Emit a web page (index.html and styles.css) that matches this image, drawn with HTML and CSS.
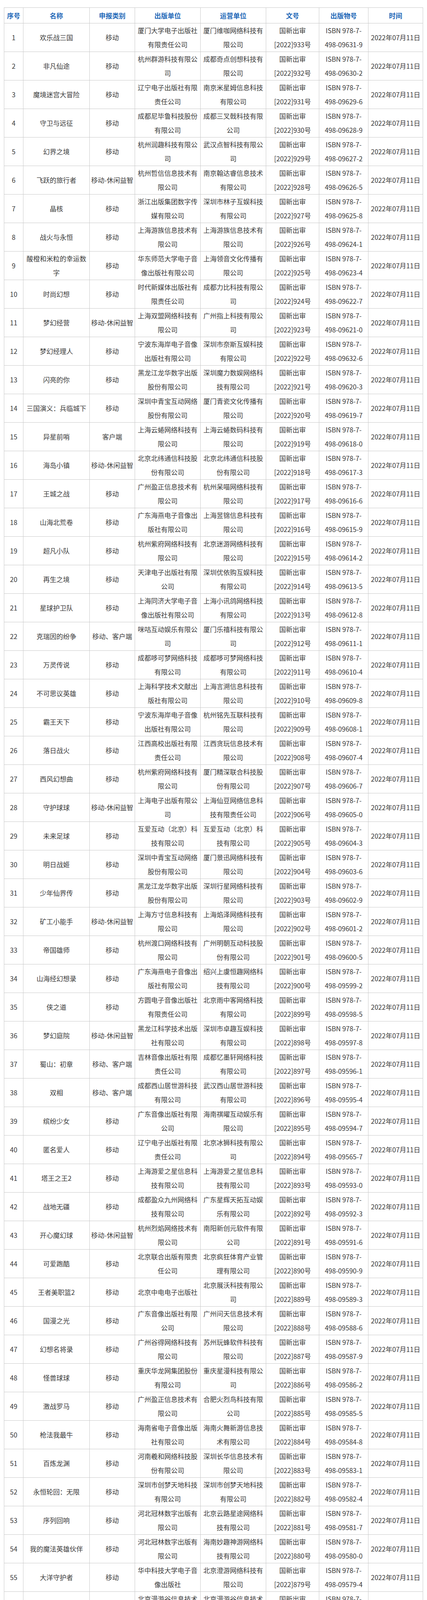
FILE: index.html
```html
<!DOCTYPE html>
<html lang="zh-CN">
<head>
<meta charset="utf-8">
<title>版号列表</title>
<link rel="stylesheet" href="styles.css">
</head>
<body>
<div class="page">
<table class="list">
<colgroup>
<col class="c-no"><col class="c-name"><col class="c-type"><col class="c-pub"><col class="c-op"><col class="c-doc"><col class="c-isbn"><col class="c-date">
</colgroup>
<thead>
<tr><th>序号</th><th>名称</th><th>申报类别</th><th>出版单位</th><th>运营单位</th><th>文号</th><th>出版物号</th><th>时间</th></tr>
</thead>
<tbody>
<tr><td>1</td><td>欢乐战三国</td><td>移动</td><td>厦门大学电子出版社有限责任公司</td><td>厦门维咖网络科技有限公司</td><td>国新出审<br>[2022]933号</td><td>ISBN 978-7-<br>498-09631-9</td><td class="date">2022年07月11日</td></tr>
<tr><td>2</td><td>非凡仙途</td><td>移动</td><td>杭州群游科技有限公司</td><td>成都奇点创想科技有限公司</td><td>国新出审<br>[2022]932号</td><td>ISBN 978-7-<br>498-09630-2</td><td class="date">2022年07月11日</td></tr>
<tr><td>3</td><td>魔境迷宫大冒险</td><td>移动</td><td>辽宁电子出版社有限责任公司</td><td>南京米星姆信息科技有限公司</td><td>国新出审<br>[2022]931号</td><td>ISBN 978-7-<br>498-09629-6</td><td class="date">2022年07月11日</td></tr>
<tr><td>4</td><td>守卫与远征</td><td>移动</td><td>成都尼毕鲁科技股份有限公司</td><td>成都三叉戟科技有限公司</td><td>国新出审<br>[2022]930号</td><td>ISBN 978-7-<br>498-09628-9</td><td class="date">2022年07月11日</td></tr>
<tr><td>5</td><td>幻界之境</td><td>移动</td><td>杭州润趣科技有限公司</td><td>武汉点智科技有限公司</td><td>国新出审<br>[2022]929号</td><td>ISBN 978-7-<br>498-09627-2</td><td class="date">2022年07月11日</td></tr>
<tr><td>6</td><td>飞跃的旅行者</td><td>移动-休闲益智</td><td>杭州哲信信息技术有限公司</td><td>南京翰达睿信息技术有限公司</td><td>国新出审<br>[2022]928号</td><td>ISBN 978-7-<br>498-09626-5</td><td class="date">2022年07月11日</td></tr>
<tr><td>7</td><td>晶核</td><td>移动</td><td>浙江出版集团数字传媒有限公司</td><td>深圳市林子互娱科技有限公司</td><td>国新出审<br>[2022]927号</td><td>ISBN 978-7-<br>498-09625-8</td><td class="date">2022年07月11日</td></tr>
<tr><td>8</td><td>战火与永恒</td><td>移动</td><td>上海游族信息技术有限公司</td><td>上海游族信息技术有限公司</td><td>国新出审<br>[2022]926号</td><td>ISBN 978-7-<br>498-09624-1</td><td class="date">2022年07月11日</td></tr>
<tr><td>9</td><td>酸橙和米粒的幸运数字</td><td>移动</td><td>华东师范大学电子音像出版社有限公司</td><td>上海领音文化传播有限公司</td><td>国新出审<br>[2022]925号</td><td>ISBN 978-7-<br>498-09623-4</td><td class="date">2022年07月11日</td></tr>
<tr><td>10</td><td>时尚幻想</td><td>移动</td><td>时代新媒体出版社有限责任公司</td><td>成都力比科技有限公司</td><td>国新出审<br>[2022]924号</td><td>ISBN 978-7-<br>498-09622-7</td><td class="date">2022年07月11日</td></tr>
<tr><td>11</td><td>梦幻经营</td><td>移动-休闲益智</td><td>上海双盟网络科技有限公司</td><td>广州指上科技有限公司</td><td>国新出审<br>[2022]923号</td><td>ISBN 978-7-<br>498-09621-0</td><td class="date">2022年07月11日</td></tr>
<tr><td>12</td><td>梦幻经理人</td><td>移动</td><td>宁波东海岸电子音像出版社有限公司</td><td>深圳市奈斯互娱科技有限公司</td><td>国新出审<br>[2022]922号</td><td>ISBN 978-7-<br>498-09632-6</td><td class="date">2022年07月11日</td></tr>
<tr><td>13</td><td>闪亮的你</td><td>移动</td><td>黑龙江龙华数字出版股份有限公司</td><td>深圳魔力数娱网络科技有限公司</td><td>国新出审<br>[2022]921号</td><td>ISBN 978-7-<br>498-09620-3</td><td class="date">2022年07月11日</td></tr>
<tr><td>14</td><td>三国演义：兵临城下</td><td>移动</td><td>深圳中青宝互动网络股份有限公司</td><td>厦门青瓷文化传播有限公司</td><td>国新出审<br>[2022]920号</td><td>ISBN 978-7-<br>498-09619-7</td><td class="date">2022年07月11日</td></tr>
<tr><td>15</td><td>异星前哨</td><td>客户端</td><td>上海云蜷网络科技有限公司</td><td>上海云蜷数码科技有限公司</td><td>国新出审<br>[2022]919号</td><td>ISBN 978-7-<br>498-09618-0</td><td class="date">2022年07月11日</td></tr>
<tr><td>16</td><td>海岛小镇</td><td>移动-休闲益智</td><td>北京北纬通信科技股份有限公司</td><td>北京北纬通信科技股份有限公司</td><td>国新出审<br>[2022]918号</td><td>ISBN 978-7-<br>498-09617-3</td><td class="date">2022年07月11日</td></tr>
<tr><td>17</td><td>王城之战</td><td>移动</td><td>广州盈正信息技术有限公司</td><td>杭州呆喵网络科技有限公司</td><td>国新出审<br>[2022]917号</td><td>ISBN 978-7-<br>498-09616-6</td><td class="date">2022年07月11日</td></tr>
<tr><td>18</td><td>山海北荒卷</td><td>移动</td><td>广东海燕电子音像出版社有限公司</td><td>上海昱锦信息科技有限公司</td><td>国新出审<br>[2022]916号</td><td>ISBN 978-7-<br>498-09615-9</td><td class="date">2022年07月11日</td></tr>
<tr><td>19</td><td>超凡小队</td><td>移动</td><td>杭州紫府网络科技有限公司</td><td>北京迷游网络科技有限公司</td><td>国新出审<br>[2022]915号</td><td>ISBN 978-7-<br>498-09614-2</td><td class="date">2022年07月11日</td></tr>
<tr><td>20</td><td>再生之境</td><td>移动</td><td>天津电子出版社有限公司</td><td>深圳优依购互娱科技有限公司</td><td>国新出审<br>[2022]914号</td><td>ISBN 978-7-<br>498-09613-5</td><td class="date">2022年07月11日</td></tr>
<tr><td>21</td><td>星球护卫队</td><td>移动</td><td>上海同济大学电子音像出版社有限公司</td><td>上海小讯鸽网络科技有限公司</td><td>国新出审<br>[2022]913号</td><td>ISBN 978-7-<br>498-09612-8</td><td class="date">2022年07月11日</td></tr>
<tr><td>22</td><td>克瑞因的纷争</td><td>移动、客户端</td><td>咪咕互动娱乐有限公司</td><td>厦门乐禧科技有限公司</td><td>国新出审<br>[2022]912号</td><td>ISBN 978-7-<br>498-09611-1</td><td class="date">2022年07月11日</td></tr>
<tr><td>23</td><td>万灵传说</td><td>移动</td><td>成都哆可梦网络科技有限公司</td><td>成都哆可梦网络科技有限公司</td><td>国新出审<br>[2022]911号</td><td>ISBN 978-7-<br>498-09610-4</td><td class="date">2022年07月11日</td></tr>
<tr><td>24</td><td>不可思议英雄</td><td>移动</td><td>上海科学技术文献出版社有限公司</td><td>上海言溯信息科技有限公司</td><td>国新出审<br>[2022]910号</td><td>ISBN 978-7-<br>498-09609-8</td><td class="date">2022年07月11日</td></tr>
<tr><td>25</td><td>霸王天下</td><td>移动</td><td>宁波东海岸电子音像出版社有限公司</td><td>杭州铭先互联科技有限公司</td><td>国新出审<br>[2022]909号</td><td>ISBN 978-7-<br>498-09608-1</td><td class="date">2022年07月11日</td></tr>
<tr><td>26</td><td>落日战火</td><td>移动</td><td>江西高校出版社有限责任公司</td><td>江西贪玩信息技术有限公司</td><td>国新出审<br>[2022]908号</td><td>ISBN 978-7-<br>498-09607-4</td><td class="date">2022年07月11日</td></tr>
<tr><td>27</td><td>西风幻想曲</td><td>移动</td><td>杭州紫府网络科技有限公司</td><td>厦门精深联合科技股份有限公司</td><td>国新出审<br>[2022]907号</td><td>ISBN 978-7-<br>498-09606-7</td><td class="date">2022年07月11日</td></tr>
<tr><td>28</td><td>守护球球</td><td>移动-休闲益智</td><td>上海电子出版有限公司</td><td>上海仙豆网络信息科技有限责任公司</td><td>国新出审<br>[2022]906号</td><td>ISBN 978-7-<br>498-09605-0</td><td class="date">2022年07月11日</td></tr>
<tr><td>29</td><td>未来足球</td><td>移动</td><td>互爱互动（北京）科技有限公司</td><td>互爱互动（北京）科技有限公司</td><td>国新出审<br>[2022]905号</td><td>ISBN 978-7-<br>498-09604-3</td><td class="date">2022年07月11日</td></tr>
<tr><td>30</td><td>明日战姬</td><td>移动</td><td>深圳中青宝互动网络股份有限公司</td><td>厦门景迅网络科技有限公司</td><td>国新出审<br>[2022]904号</td><td>ISBN 978-7-<br>498-09603-6</td><td class="date">2022年07月11日</td></tr>
<tr><td>31</td><td>少年仙界传</td><td>移动</td><td>黑龙江龙华数字出版股份有限公司</td><td>深圳行星网络科技有限公司</td><td>国新出审<br>[2022]903号</td><td>ISBN 978-7-<br>498-09602-9</td><td class="date">2022年07月11日</td></tr>
<tr><td>32</td><td>矿工小能手</td><td>移动-休闲益智</td><td>上海方寸信息科技有限公司</td><td>上海焰泽网络科技有限公司</td><td>国新出审<br>[2022]902号</td><td>ISBN 978-7-<br>498-09601-2</td><td class="date">2022年07月11日</td></tr>
<tr><td>33</td><td>帝国雄师</td><td>移动</td><td>杭州渡口网络科技有限公司</td><td>广州明朝互动科技股份有限公司</td><td>国新出审<br>[2022]901号</td><td>ISBN 978-7-<br>498-09600-5</td><td class="date">2022年07月11日</td></tr>
<tr><td>34</td><td>山海经幻想录</td><td>移动</td><td>广东海燕电子音像出版社有限公司</td><td>绍兴上虞恒趣网络科技有限公司</td><td>国新出审<br>[2022]900号</td><td>ISBN 978-7-<br>498-09599-2</td><td class="date">2022年07月11日</td></tr>
<tr><td>35</td><td>侠之道</td><td>移动</td><td>方圆电子音像出版社有限责任公司</td><td>北京雨中客网络科技有限公司</td><td>国新出审<br>[2022]899号</td><td>ISBN 978-7-<br>498-09598-5</td><td class="date">2022年07月11日</td></tr>
<tr><td>36</td><td>梦幻庭院</td><td>移动-休闲益智</td><td>黑龙江科学技术出版社有限公司</td><td>深圳市卓趣互娱科技有限公司</td><td>国新出审<br>[2022]898号</td><td>ISBN 978-7-<br>498-09597-8</td><td class="date">2022年07月11日</td></tr>
<tr><td>37</td><td>蜀山：初章</td><td>移动、客户端</td><td>吉林音像出版社有限责任公司</td><td>成都忆墨轩网络科技有限公司</td><td>国新出审<br>[2022]897号</td><td>ISBN 978-7-<br>498-09596-1</td><td class="date">2022年07月11日</td></tr>
<tr><td>38</td><td>双相</td><td>移动、客户端</td><td>成都西山居世游科技有限公司</td><td>武汉西山居世游科技有限公司</td><td>国新出审<br>[2022]896号</td><td>ISBN 978-7-<br>498-09595-4</td><td class="date">2022年07月11日</td></tr>
<tr><td>39</td><td>缤纷少女</td><td>移动</td><td>广东音像出版社有限公司</td><td>海南祺曜互动娱乐有限公司</td><td>国新出审<br>[2022]895号</td><td>ISBN 978-7-<br>498-09594-7</td><td class="date">2022年07月11日</td></tr>
<tr><td>40</td><td>匿名爱人</td><td>移动</td><td>辽宁电子出版社有限责任公司</td><td>北京冰狮科技有限公司</td><td>国新出审<br>[2022]894号</td><td>ISBN 978-7-<br>498-09565-7</td><td class="date">2022年07月11日</td></tr>
<tr><td>41</td><td>塔王之王2</td><td>移动</td><td>上海游爱之星信息科技有限公司</td><td>上海游爱之星信息科技有限公司</td><td>国新出审<br>[2022]893号</td><td>ISBN 978-7-<br>498-09593-0</td><td class="date">2022年07月11日</td></tr>
<tr><td>42</td><td>战地无疆</td><td>移动</td><td>成都盈众九州网络科技有限公司</td><td>广东星辉天拓互动娱乐有限公司</td><td>国新出审<br>[2022]892号</td><td>ISBN 978-7-<br>498-09592-3</td><td class="date">2022年07月11日</td></tr>
<tr><td>43</td><td>开心魔幻球</td><td>移动-休闲益智</td><td>杭州烈焰网络技术有限公司</td><td>南阳新创元软件有限公司</td><td>国新出审<br>[2022]891号</td><td>ISBN 978-7-<br>498-09591-6</td><td class="date">2022年07月11日</td></tr>
<tr><td>44</td><td>可爱跑酷</td><td>移动</td><td>北京联合出版有限责任公司</td><td>北京疯狂体育产业管理有限公司</td><td>国新出审<br>[2022]890号</td><td>ISBN 978-7-<br>498-09590-9</td><td class="date">2022年07月11日</td></tr>
<tr><td>45</td><td>王者美职篮2</td><td>移动</td><td>北京中电电子出版社</td><td>北京展沃科技有限公司</td><td>国新出审<br>[2022]889号</td><td>ISBN 978-7-<br>498-09589-3</td><td class="date">2022年07月11日</td></tr>
<tr><td>46</td><td>国漫之光</td><td>移动</td><td>广东音像出版社有限公司</td><td>广州问天信息技术有限公司</td><td>国新出审<br>[2022]888号</td><td>ISBN 978-7-<br>498-09588-6</td><td class="date">2022年07月11日</td></tr>
<tr><td>47</td><td>幻想名将录</td><td>移动</td><td>广州谷得网络科技有限公司</td><td>苏州玩蜂软件科技有限公司</td><td>国新出审<br>[2022]887号</td><td>ISBN 978-7-<br>498-09587-9</td><td class="date">2022年07月11日</td></tr>
<tr><td>48</td><td>怪兽球球</td><td>移动</td><td>重庆华龙网集团股份有限公司</td><td>重庆星漫科技有限公司</td><td>国新出审<br>[2022]886号</td><td>ISBN 978-7-<br>498-09586-2</td><td class="date">2022年07月11日</td></tr>
<tr><td>49</td><td>激战罗马</td><td>移动</td><td>广州盈正信息技术有限公司</td><td>合肥火烈鸟科技有限公司</td><td>国新出审<br>[2022]885号</td><td>ISBN 978-7-<br>498-09585-5</td><td class="date">2022年07月11日</td></tr>
<tr><td>50</td><td>枪法我最牛</td><td>移动</td><td>海南省电子音像出版社有限公司</td><td>海南火舞新游信息技术有限公司</td><td>国新出审<br>[2022]884号</td><td>ISBN 978-7-<br>498-09584-8</td><td class="date">2022年07月11日</td></tr>
<tr><td>51</td><td>百炼龙渊</td><td>移动</td><td>河南羲和网络科技股份有限公司</td><td>深圳长华信息技术有限公司</td><td>国新出审<br>[2022]883号</td><td>ISBN 978-7-<br>498-09583-1</td><td class="date">2022年07月11日</td></tr>
<tr><td>52</td><td>永恒轮回：无限</td><td>移动</td><td>深圳市创梦天地科技有限公司</td><td>深圳市创梦天地科技有限公司</td><td>国新出审<br>[2022]882号</td><td>ISBN 978-7-<br>498-09582-4</td><td class="date">2022年07月11日</td></tr>
<tr><td>53</td><td>序列回响</td><td>移动</td><td>河北冠林数字出版有限公司</td><td>北京云路星途网络科技有限公司</td><td>国新出审<br>[2022]881号</td><td>ISBN 978-7-<br>498-09581-7</td><td class="date">2022年07月11日</td></tr>
<tr><td>54</td><td>我的魔法英雄伙伴</td><td>移动</td><td>河北冠林数字出版有限公司</td><td>海南妙趣神游网络科技有限公司</td><td>国新出审<br>[2022]880号</td><td>ISBN 978-7-<br>498-09580-0</td><td class="date">2022年07月11日</td></tr>
<tr><td>55</td><td>大洋守护者</td><td>移动</td><td>华中科技大学电子音像出版社</td><td>北京澄游网络科技有限公司</td><td>国新出审<br>[2022]879号</td><td>ISBN 978-7-<br>498-09579-4</td><td class="date">2022年07月11日</td></tr>
<tr><td>56</td><td>守望之战</td><td>移动</td><td>北京漫游谷信息技术有限公司</td><td>北京漫游谷信息技术有限公司</td><td>国新出审<br>[2022]878号</td><td>ISBN 978-7-<br>498-09578-7</td><td class="date">2022年07月11日</td></tr>
<tr><td>57</td><td>大周列国志</td><td>移动</td><td>广东太平洋电子出版社</td><td>厦门星岚造意网络技术有限公司</td><td>国新出审<br>[2022]877号</td><td>ISBN 978-7-<br>498-09577-0</td><td class="date">2022年07月11日</td></tr>
<tr><td>58</td><td>梦回白玉京</td><td>移动</td><td>安徽新华电子音像出版社</td><td>上海人人游戏科技发展股份有限公司</td><td>国新出审<br>[2022]876号</td><td>ISBN 978-7-<br>498-09576-3</td><td class="date">2022年07月11日</td></tr>
<tr><td>59</td><td>艾恩洛亚炼金起源之章</td><td>移动</td><td>北京伯通电子出版社</td><td>掌上彩讯（北京）无线传媒技术有限公司</td><td>国新出审<br>[2022]875号</td><td>ISBN 978-7-<br>498-09575-6</td><td class="date">2022年07月11日</td></tr>
<tr><td>60</td><td>九合诸侯</td><td>移动</td><td>杭州润趣科技有限公司</td><td>杭州火之网络科技有限公司</td><td>国新出审<br>[2022]874号</td><td>ISBN 978-7-<br>498-09574-9</td><td class="date">2022年07月11日</td></tr>
<tr><td>61</td><td>勇敢的哈克</td><td>移动</td><td>厦门雷霆互动网络有限公司</td><td>深圳市晓创生活科技有限公司</td><td>国新出审<br>[2022]873号</td><td>ISBN 978-7-<br>498-09573-2</td><td class="date">2022年07月11日</td></tr>
<tr><td>62</td><td>迷你枪战精英</td><td>移动</td><td>湖北省扬子江影音有限责任公司</td><td>深圳市迷你玩科技有限公司</td><td>国新出审<br>[2022]872号</td><td>ISBN 978-7-<br>498-09572-5</td><td class="date">2022年07月11日</td></tr>
<tr><td>63</td><td>暗影火炬城</td><td>客户端、游戏机-PS5</td><td>上海蓝颢网络科技有限公司</td><td>上海幻电信息科技有限公司</td><td>国新出审<br>[2022]871号</td><td>ISBN 978-7-<br>498-09571-8</td><td class="date">2022年07月11日</td></tr>
<tr><td>64</td><td>非匿名指令</td><td>移动</td><td>海南动网先锋网络科技有限公司</td><td>海南动网先锋网络科技有限公司</td><td>国新出审<br>[2022]870号</td><td>ISBN 978-7-<br>498-09570-1</td><td class="date">2022年07月11日</td></tr>
<tr><td>65</td><td>荒岛狩猎</td><td>移动</td><td>海南省电子音像出版社有限公司</td><td>海南自贸区椰云网络科技有限公司</td><td>国新出审<br>[2022]869号</td><td>ISBN 978-7-<br>498-09569-5</td><td class="date">2022年07月11日</td></tr>
<tr><td>66</td><td>我叫MT：归来</td><td>移动</td><td>北京中清龙图网络技术有限公司</td><td>北京中清龙图网络技术有限公司</td><td>国新出审<br>[2022]868号</td><td>ISBN 978-7-<br>498-09568-8</td><td class="date">2022年07月11日</td></tr>
<tr><td>67</td><td>紫塞秋风</td><td>客户端</td><td>炫彩互动网络科技有限公司</td><td>杭州风侠网络科技有限公司</td><td>国新出审<br>[2022]867号</td><td>ISBN 978-7-<br>498-09567-1</td><td class="date">2022年07月11日</td></tr>
</tbody>
</table>
</div>
</body>
</html>
```

FILE: styles.css
```css
html, body {
  margin: 0;
  padding: 0;
  background: #ffffff;
}

.page {
  padding: 19px 11px 14px 10px;
  font-family: "Noto Sans CJK SC", "Noto Sans", sans-serif;
  font-size: 17px;
  color: #3a3a3a;
}

.list {
  width: 1073px;
  border-collapse: collapse;
  table-layout: fixed;
}

.c-no { width: 49px; }
.c-name { width: 170px; }
.c-type { width: 116px; }
.c-pub { width: 168px; }
.c-op { width: 168px; }
.c-doc { width: 136px; }
.c-isbn { width: 126px; }
.c-date { width: 140px; }

.list th,
.list td {
  border: 1px solid #c9c9c9;
  text-align: center;
  vertical-align: middle;
  padding: 0 2px;
  word-break: normal;
}

.list th {
  line-height: 39px;
  color: #1f68b8;
  font-weight: bold;
}

.list td {
  line-height: 36px;
}

.list td.date {
  white-space: nowrap;
  padding: 0;
}
```
